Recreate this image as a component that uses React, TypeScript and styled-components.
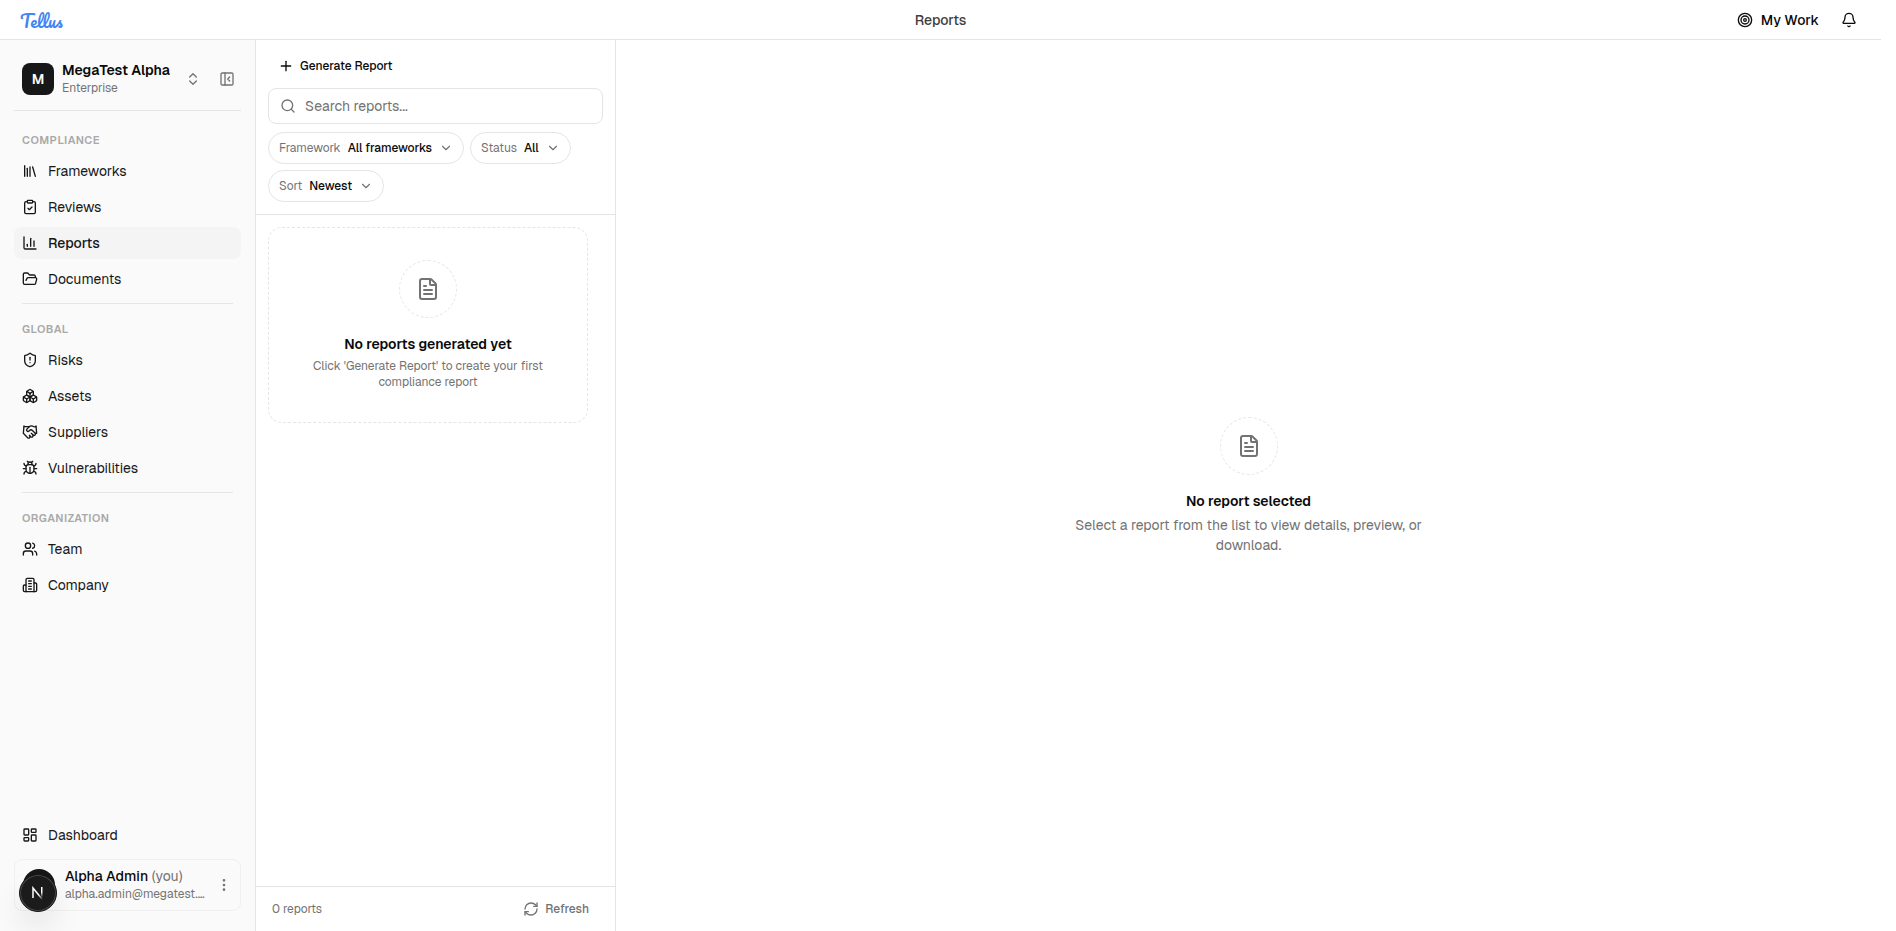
import React from "react";
import styled, { createGlobalStyle, css } from "styled-components";
import {
  Bell, Boxes, Bug, ChartColumn, ChevronDown, ChevronsUpDown, ClipboardCheck,
  EllipsisVertical, FileText, FolderOpen, Handshake, LayoutDashboard, Library,
  PanelLeftClose, Plus, RefreshCw, Search, ShieldAlert, Target, Users,
} from "lucide-react";

const line = "#e5e5e5";
const muted = "#737373";
const ink = "#0a0a0a";

const GlobalStyle = createGlobalStyle`
  *, *::before, *::after { box-sizing: border-box; }
  body {
    margin: 0;
    background: #fff;
    color: ${ink};
    font: 400 14px/20px Geist, Inter, "Liberation Sans", sans-serif;
  }
  h1, h2, p { margin: 0; font: inherit; }
  button, input, select { font: inherit; color: inherit; }
  button { border: 0; padding: 0; background: none; cursor: pointer; }
  svg { flex: none; display: block; }
`;

const Page = styled.div`
  display: flex;
  flex-direction: column;
  height: 100vh;
  padding-right: 15px;
`;

const TopBar = styled.header`
  display: grid;
  grid-template-columns: 1fr auto 1fr;
  align-items: center;
  flex: none;
  height: 40px;
  padding: 0 20px;
  border-bottom: 1px solid ${line};
`;

const Logo = styled.a`
  justify-self: start;
  padding-top: 2px;
  color: #4285f4;
  font: 400 17px/20px Pacifico, "Liberation Serif", cursive;
  text-decoration: none;
`;

const PageTitle = styled.h1`
  color: #404040;
  font-weight: 500;
`;

const TopActions = styled.div`
  display: flex;
  justify-self: end;
  align-items: center;
  gap: 22px;
  padding-right: 4px;
`;

const IconButton = styled.button`
  display: flex;
  align-items: center;
  gap: 8px;
  font-weight: 500;
`;

const Body = styled.div`
  display: flex;
  flex: 1;
  min-height: 0;
`;

const Sidebar = styled.aside`
  display: flex;
  flex-direction: column;
  flex: none;
  width: 256px;
  padding: 0 14px 20px;
  border-right: 1px solid ${line};
  background: #fafafa;
`;

const Workspace = styled.div`
  display: flex;
  align-items: center;
  padding: 22px 6px 14px 8px;
  border-bottom: 1px solid ${line};
  color: ${muted};
`;

const WorkspaceSwitch = styled.button`
  display: flex;
  flex: 1;
  align-items: center;
  justify-content: space-between;
  margin-right: 18px;
  text-align: left;
`;

const Identity = styled.span`
  display: flex;
  align-items: center;
  gap: 8px;
`;

const Tile = styled.span`
  display: grid;
  place-items: center;
  width: 32px;
  height: 32px;
  border-radius: 8px;
  background: #171717;
  color: #fafafa;
  font-weight: 600;
`;

const Stack = styled.span`
  display: flex;
  flex-direction: column;
  flex: 1;
  gap: 2px;
  min-width: 0;
`;

const Name = styled.span<{ $strong?: boolean }>`
  color: ${ink};
  font-weight: ${(p) => (p.$strong ? 600 : 500)};
  line-height: 16px;
`;

const Small = styled.span`
  color: ${muted};
  font-size: 12px;
  line-height: 16px;
  white-space: nowrap;
`;

const Nav = styled.nav`
  flex: 1;
  padding-top: 4px;
`;

const Group = styled.section`
  & + &::before {
    content: "";
    display: block;
    margin: 8px 8px 0;
    border-top: 1px solid ${line};
  }
`;

const GroupTitle = styled.h2`
  padding: 17px 8px 7px;
  color: #a8a8a8;
  font-size: 11px;
  font-weight: 600;
  line-height: 16px;
  letter-spacing: 0.05em;
  text-transform: uppercase;
`;

const Items = styled.div`
  display: flex;
  flex-direction: column;
  gap: 4px;
`;

const Item = styled.a<{ $active?: boolean }>`
  display: flex;
  align-items: center;
  gap: 10px;
  height: 32px;
  padding: 0 8px;
  border-radius: 8px;
  color: #171717;
  text-decoration: none;
  ${(p) => p.$active && css`
    background: #f4f4f4;
    font-weight: 500;
  `}
`;

const UserCard = styled.button`
  display: flex;
  align-items: center;
  gap: 6px;
  height: 52px;
  margin-top: 8px;
  padding: 0 8px;
  border: 1px solid #f0f0f0;
  border-radius: 8px;
  color: ${muted};
  text-align: left;
`;

const Avatar = styled.span`
  position: relative;
  flex: none;
  width: 32px;
  height: 32px;
  margin-right: 4px;
  border-radius: 50%;
  background: #171717;
`;

const DevBadge = styled.span`
  position: absolute;
  top: 5px;
  left: -4px;
  display: grid;
  place-items: center;
  width: 38px;
  height: 38px;
  border: 1px solid #171717;
  border-radius: 50%;
  background: #1b1b1b;
  box-shadow: inset 0 0 0 1px #4a4a4a, 0 16px 32px -8px rgba(0, 0, 0, 0.24);
`;

const You = styled.span`
  color: ${muted};
  font-weight: 400;
`;

const ListPanel = styled.section`
  display: flex;
  flex-direction: column;
  flex: none;
  width: 360px;
  border-right: 1px solid ${line};
`;

const Tools = styled.div`
  display: flex;
  flex-direction: column;
  align-items: flex-start;
  gap: 8px;
  padding: 12px;
  border-bottom: 1px solid ${line};
`;

const GenerateButton = styled.button`
  display: flex;
  align-items: center;
  gap: 6px;
  height: 28px;
  padding: 0 10px;
  font-size: 12px;
  font-weight: 500;
`;

const SearchBox = styled.label`
  display: flex;
  align-items: center;
  gap: 9px;
  align-self: stretch;
  height: 36px;
  padding: 0 11px;
  border: 1px solid ${line};
  border-radius: 8px;
  color: ${muted};
`;

const SearchInput = styled.input`
  flex: 1;
  min-width: 0;
  padding: 0;
  border: 0;
  outline: 0;
  background: none;
  &::placeholder { color: ${muted}; opacity: 1; }
`;

const Filters = styled.div`
  display: flex;
  flex-wrap: wrap;
  gap: 6px;
`;

const Pill = styled.label`
  display: flex;
  align-items: center;
  height: 32px;
  padding: 0 10px;
  border: 1px solid ${line};
  border-radius: 16px;
  color: ${muted};
  font-size: 12px;
`;

const PillSelect = styled.select`
  appearance: none;
  field-sizing: content;
  margin: 0 7px;
  padding: 0;
  border: 0;
  outline: 0;
  background: none;
  color: ${ink};
  font-weight: 500;
`;

const ListBody = styled.div`
  flex: 1;
  padding: 12px 27px 12px 12px;
`;

const Empty = styled.div<{ $framed?: boolean }>`
  display: flex;
  flex-direction: column;
  align-items: center;
  text-align: center;
  ${(p) => p.$framed && css`
    padding: 32px;
    border: 1px dashed ${line};
    border-radius: 14px;
  `}
`;

const Medallion = styled.span`
  display: grid;
  place-items: center;
  width: 58px;
  height: 58px;
  margin-bottom: 16px;
  border: 1px dashed ${line};
  border-radius: 50%;
  color: ${muted};
`;

const EmptyTitle = styled.h2`
  margin-bottom: 4px;
  font-weight: 600;
`;

const EmptyText = styled.p<{ $small?: boolean }>`
  max-width: 384px;
  color: ${muted};
  ${(p) => p.$small && css`
    font-size: 12px;
    line-height: 16px;
  `}
`;

const ListFooter = styled.footer`
  display: flex;
  align-items: center;
  justify-content: space-between;
  height: 45px;
  padding: 0 26px 0 16px;
  border-top: 1px solid ${line};
  color: ${muted};
  font-size: 12px;
`;

const RefreshButton = styled.button`
  display: flex;
  align-items: center;
  gap: 6px;
  font-weight: 500;
`;

const Detail = styled.main`
  display: grid;
  place-items: center;
  flex: 1;
`;

function Office({ size = 16 }: { size?: number }) {
  return (
    <svg
      width={size}
      height={size}
      viewBox="0 0 24 24"
      fill="none"
      stroke="currentColor"
      strokeWidth="2"
      strokeLinecap="round"
      strokeLinejoin="round"
      aria-hidden="true"
    >
      <path d="M6 22V4a2 2 0 0 1 2-2h8a2 2 0 0 1 2 2v18Z" />
      <path d="M6 12H4a2 2 0 0 0-2 2v6a2 2 0 0 0 2 2h2" />
      <path d="M18 9h2a2 2 0 0 1 2 2v9a2 2 0 0 1-2 2h-2" />
      <path d="M10 6h4M10 10h4M10 14h4M10 18h4" />
    </svg>
  );
}

type Entry = { label: string; icon: React.ComponentType<{ size?: number }>; active?: boolean };

const groups: { title: string; items: Entry[] }[] = [
  {
    title: "Compliance",
    items: [
      { label: "Frameworks", icon: Library },
      { label: "Reviews", icon: ClipboardCheck },
      { label: "Reports", icon: ChartColumn, active: true },
      { label: "Documents", icon: FolderOpen },
    ],
  },
  {
    title: "Global",
    items: [
      { label: "Risks", icon: ShieldAlert },
      { label: "Assets", icon: Boxes },
      { label: "Suppliers", icon: Handshake },
      { label: "Vulnerabilities", icon: Bug },
    ],
  },
  {
    title: "Organization",
    items: [
      { label: "Team", icon: Users },
      { label: "Company", icon: Office },
    ],
  },
];

const filters = [
  { label: "Framework", value: "All frameworks" },
  { label: "Status", value: "All" },
  { label: "Sort", value: "Newest" },
];

function NavItem({ label, icon: Icon, active }: Entry) {
  return (
    <Item href="#" $active={active} aria-current={active ? "page" : undefined}>
      <Icon size={16} />
      {label}
    </Item>
  );
}

function EmptyState({ title, text, framed }: { title: string; text: string; framed?: boolean }) {
  return (
    <Empty $framed={framed}>
      <Medallion><FileText size={24} /></Medallion>
      <EmptyTitle>{title}</EmptyTitle>
      <EmptyText $small={framed}>{text}</EmptyText>
    </Empty>
  );
}

export default function App() {
  return (
    <Page>
      <GlobalStyle />
      <TopBar>
        <Logo href="#">Tellus</Logo>
        <PageTitle>Reports</PageTitle>
        <TopActions>
          <IconButton><Target size={16} />My Work</IconButton>
          <IconButton aria-label="Notifications"><Bell size={16} /></IconButton>
        </TopActions>
      </TopBar>
      <Body>
        <Sidebar>
          <Workspace>
            <WorkspaceSwitch>
              <Identity>
                <Tile>M</Tile>
                <Stack>
                  <Name $strong>MegaTest Alpha</Name>
                  <Small>Enterprise</Small>
                </Stack>
              </Identity>
              <ChevronsUpDown size={16} />
            </WorkspaceSwitch>
            <IconButton aria-label="Collapse sidebar"><PanelLeftClose size={16} /></IconButton>
          </Workspace>
          <Nav>
            {groups.map((g) => (
              <Group key={g.title}>
                <GroupTitle>{g.title}</GroupTitle>
                <Items>{g.items.map((i) => <NavItem key={i.label} {...i} />)}</Items>
              </Group>
            ))}
          </Nav>
          <NavItem label="Dashboard" icon={LayoutDashboard} />
          <UserCard>
            <Avatar>
              <DevBadge>
                <svg width="14" height="14" viewBox="0 0 14 14" fill="none" aria-hidden="true">
                  <defs>
                    <linearGradient id="fade" x1="0" y1="0" x2="0" y2="1">
                      <stop offset="0.5" stopColor="#fff" />
                      <stop offset="1" stopColor="#fff" stopOpacity="0.1" />
                    </linearGradient>
                    <linearGradient id="fadeDiagonal" x1="0" y1="0" x2="1" y2="1">
                      <stop offset="0.6" stopColor="#fff" />
                      <stop offset="1" stopColor="#fff" stopOpacity="0.2" />
                    </linearGradient>
                  </defs>
                  <path d="M2 12V2L11 13" stroke="url(#fadeDiagonal)" strokeWidth="1.5" />
                  <rect x="10" y="1" width="1.5" height="10" fill="url(#fade)" />
                </svg>
              </DevBadge>
            </Avatar>
            <Stack>
              <Name>Alpha Admin <You>(you)</You></Name>
              <Small>alpha.admin@megatest.…</Small>
            </Stack>
            <EllipsisVertical size={16} />
          </UserCard>
        </Sidebar>
        <ListPanel>
          <Tools>
            <GenerateButton><Plus size={16} />Generate Report</GenerateButton>
            <SearchBox>
              <Search size={16} />
              <SearchInput placeholder="Search reports..." aria-label="Search reports" />
            </SearchBox>
            <Filters>
              {filters.map((f) => (
                <Pill key={f.label}>
                  {f.label}
                  <PillSelect><option>{f.value}</option></PillSelect>
                  <ChevronDown size={14} />
                </Pill>
              ))}
            </Filters>
          </Tools>
          <ListBody>
            <EmptyState
              framed
              title="No reports generated yet"
              text="Click 'Generate Report' to create your first compliance report"
            />
          </ListBody>
          <ListFooter>
            0 reports
            <RefreshButton><RefreshCw size={16} />Refresh</RefreshButton>
          </ListFooter>
        </ListPanel>
        <Detail>
          <EmptyState
            title="No report selected"
            text="Select a report from the list to view details, preview, or download."
          />
        </Detail>
      </Body>
    </Page>
  );
}
